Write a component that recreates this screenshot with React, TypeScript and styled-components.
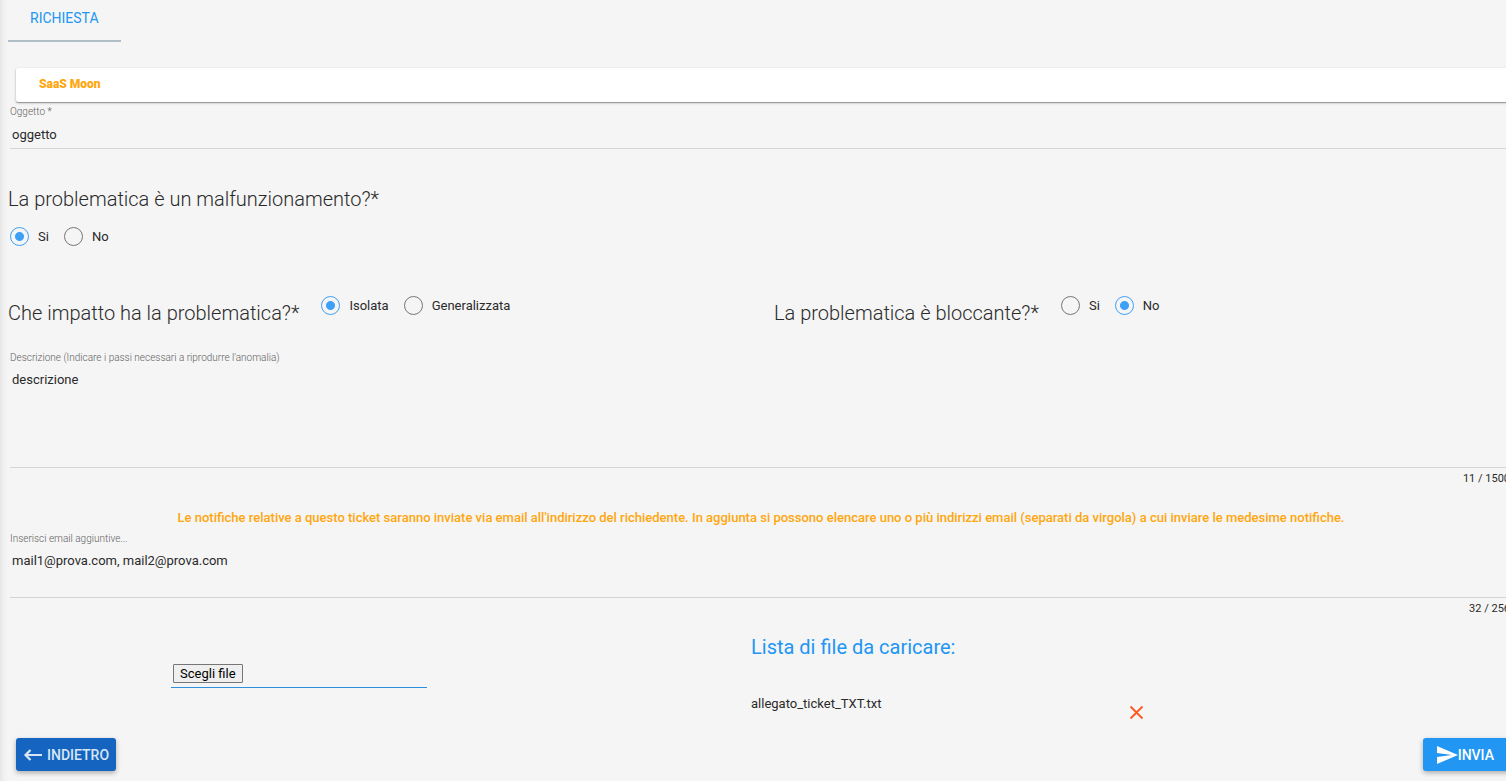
import React, { useId, useState } from "react";
import styled, { createGlobalStyle } from "styled-components";

const GlobalStyle = createGlobalStyle`
  *, *::before, *::after { box-sizing: border-box; }
  html { background: #f5f5f5; }
  body {
    margin: 0;
    overflow-x: hidden;
    color: #2a2a2a;
    font-family: Roboto, "Liberation Sans", sans-serif;
    font-size: 13px;
    line-height: 16px;
  }
  button, input, textarea { font: inherit; color: inherit; letter-spacing: inherit; }
`;

const Page = styled.main`
  min-height: 100vh;
  padding-left: 8px;
  overflow: hidden;
  background: #f5f5f5;
  box-shadow: inset 8px 0 8px -8px rgba(0, 0, 0, 0.12);
`;

const Form = styled.form`
  width: 100vw;
  display: flex;
  flex-direction: column;
`;

const Tab = styled.button`
  align-self: flex-start;
  height: 42px;
  padding: 0 22px 4px;
  border: 0;
  border-bottom: 2px solid #b0bec5;
  background: none;
  color: #2196f3;
  font-size: 14px;
  text-transform: uppercase;
`;

const Banner = styled.section`
  margin: 26px 0 0 8px;
  padding: 8px 23px 10px;
  border-radius: 2px;
  background: #fff;
  box-shadow: 0 1px 1px rgba(0, 0, 0, 0.3), 0 1px 3px rgba(0, 0, 0, 0.2);
  color: #ffa60d;
  font-size: 12px;
  font-weight: 900;
`;

const FieldBox = styled.div`
  display: flex;
  flex-direction: column;
  margin-left: 2px;
`;

const FieldLabel = styled.label`
  color: #616161;
  font-size: 10px;
  font-weight: 300;
  line-height: 12px;
`;

const SubjectLabel = styled(FieldLabel)`
  margin-top: 4px;
`;

const TextInput = styled.input`
  height: 31px;
  padding: 4px 2px 2px;
  border: 0;
  border-bottom: 1px solid #d4d4d4;
  border-radius: 0;
  background: none;
  outline: none;
`;

const TextArea = styled.textarea<{ $height: number }>`
  height: ${(p) => p.$height}px;
  padding: 8px 2px;
  border: 0;
  border-bottom: 1px solid #d4d4d4;
  background: none;
  outline: none;
  resize: none;
`;

const Counter = styled.span`
  align-self: flex-end;
  margin: 4px 4px 0 0;
  font-size: 11px;
  line-height: 14px;
`;

const Question = styled.h2<{ $accent?: boolean }>`
  margin: 0;
  color: ${(p) => (p.$accent ? "#2196f3" : "#2a2a2a")};
  font-size: 20px;
  font-weight: ${(p) => (p.$accent ? 400 : 300)};
  line-height: 24px;
`;

const QuestionBlock = styled.div`
  display: flex;
  flex-direction: column;
  gap: 16px;
  margin-top: 38px;
`;

const QuestionRow = styled.div`
  display: grid;
  grid-template-columns: 1fr 1fr;
  column-gap: 26px;
  margin-top: 42px;
`;

const QuestionInline = styled.div`
  display: flex;
  align-items: flex-end;
  gap: 20px;
  padding-top: 8px;
`;

const Options = styled.div<{ $raised?: boolean }>`
  display: flex;
  gap: 15px;
  padding-left: 2px;
  margin-bottom: ${(p) => (p.$raised ? 10 : 0)}px;
`;

const Option = styled.label`
  display: flex;
  align-items: center;
  gap: 9px;
`;

const Radio = styled.input`
  appearance: none;
  width: 19px;
  height: 19px;
  margin: 0;
  border: 1px solid #757575;
  border-radius: 50%;

  &:checked {
    border-color: #3d9ff5;
    background: radial-gradient(circle, #3d9ff5 0 4px, transparent 5px);
  }
`;

const Description = styled.div`
  margin-top: 27px;
`;

const Hint = styled.p`
  margin: 24px 0 7px;
  color: #ffa60d;
  font-size: 13px;
  font-weight: 500;
  text-align: center;
`;

const Files = styled.div`
  display: grid;
  grid-template-columns: 1fr 1fr;
  margin-top: 19px;
`;

const Picker = styled.div`
  width: 256px;
  height: 25px;
  margin: 28px 0 0 163px;
  padding: 1px 2px;
  border-bottom: 1px solid #2b90e0;
`;

const HiddenFile = styled.input`
  position: absolute;
  width: 1px;
  height: 1px;
  opacity: 0;
`;

const PickerLabel = styled.label`
  display: inline-block;
  padding: 0 6px;
  border: 1px solid #767676;
  border-radius: 1px;
  background: #efefef;
  color: #000;
  line-height: 17px;
`;

const FileList = styled.div`
  display: flex;
  flex-direction: column;
  gap: 37px;
  margin-left: -10px;
`;

const FileRow = styled.div`
  display: flex;
  justify-content: space-between;
  width: 393px;
`;

const RemoveButton = styled.button`
  display: flex;
  margin-top: 9px;
  padding: 0;
  border: 0;
  background: none;
  color: #ff5722;
`;

const Actions = styled.div`
  display: flex;
  justify-content: space-between;
  margin: 18px 0 10px;
  padding-left: 8px;
`;

const ActionButton = styled.button<{ $dark?: boolean }>`
  display: flex;
  align-items: center;
  gap: ${(p) => (p.$dark ? 4 : 0)}px;
  height: 33px;
  padding: ${(p) => (p.$dark ? "0 7px" : "0 20px 0 12px")};
  border: 0;
  border-radius: 3px;
  background: ${(p) => (p.$dark ? "#1565c0" : "#2196f3")};
  box-shadow: 0 2px 5px rgba(0, 0, 0, 0.3);
  color: ${(p) => (p.$dark ? "#d9e6f5" : "#fff")};
  font-size: 14px;
  font-weight: 500;
  text-transform: uppercase;
`;

function RadioGroup({ name, label, options, initial, raised }: {
  name: string; label: string; options: string[]; initial: string; raised?: boolean;
}) {
  const [value, setValue] = useState(initial);
  return (
    <Options role="radiogroup" aria-label={label} $raised={raised}>
      {options.map((o) => (
        <Option key={o}>
          <Radio type="radio" name={name} value={o} checked={value === o} onChange={() => setValue(o)} />
          {o}
        </Option>
      ))}
    </Options>
  );
}

function LongField({ label, initial, height, max }: {
  label: string; initial: string; height: number; max: number;
}) {
  const id = useId();
  const [value, setValue] = useState(initial);
  return (
    <FieldBox>
      <FieldLabel htmlFor={id}>{label}</FieldLabel>
      <TextArea id={id} $height={height} maxLength={max} value={value} spellCheck={false}
        onChange={(e) => setValue(e.target.value)} />
      <Counter>{value.length} / {max}</Counter>
    </FieldBox>
  );
}

export default function App() {
  return (
    <>
      <GlobalStyle />
      <Page>
        <Form onSubmit={(e) => e.preventDefault()}>
          <Tab type="button">Richiesta</Tab>
          <Banner>SaaS Moon</Banner>
          <FieldBox>
            <SubjectLabel htmlFor="subject">Oggetto *</SubjectLabel>
            <TextInput id="subject" defaultValue="oggetto" />
          </FieldBox>

          <QuestionBlock>
            <Question>La problematica è un malfunzionamento?*</Question>
            <RadioGroup name="fault" label="Malfunzionamento" options={["Si", "No"]} initial="Si" />
          </QuestionBlock>

          <QuestionRow>
            <QuestionInline>
              <Question>Che impatto ha la problematica?*</Question>
              <RadioGroup name="impact" label="Impatto" options={["Isolata", "Generalizzata"]} initial="Isolata" raised />
            </QuestionInline>
            <QuestionInline>
              <Question>La problematica è bloccante?*</Question>
              <RadioGroup name="blocking" label="Bloccante" options={["Si", "No"]} initial="No" raised />
            </QuestionInline>
          </QuestionRow>

          <Description>
            <LongField label="Descrizione (Indicare i passi necessari a riprodurre l'anomalia)"
              initial="descrizione" height={104} max={1500} />
          </Description>

          <Hint>
            Le notifiche relative a questo ticket saranno inviate via email all'indirizzo del richiedente. In aggiunta si
            possono elencare uno o più indirizzi email (separati da virgola) a cui inviare le medesime notifiche.
          </Hint>
          <LongField label="Inserisci email aggiuntive..." initial="mail1@prova.com, mail2@prova.com" height={53} max={256} />

          <Files>
            <Picker>
              <HiddenFile id="attachment" type="file" />
              <PickerLabel htmlFor="attachment">Scegli file</PickerLabel>
            </Picker>
            <FileList>
              <Question $accent>Lista di file da caricare:</Question>
              <FileRow>
                <span>allegato_ticket_TXT.txt</span>
                <RemoveButton type="button" aria-label="Rimuovi allegato">
                  <svg width="15" height="15" viewBox="0 0 15 15" stroke="currentColor" strokeWidth="1.8">
                    <path d="M1.5 1.5l12 12M13.5 1.5l-12 12" />
                  </svg>
                </RemoveButton>
              </FileRow>
            </FileList>
          </Files>

          <Actions>
            <ActionButton type="button" $dark>
              <svg width="20" height="20" viewBox="0 0 20 20" fill="none" stroke="currentColor" strokeWidth="2.2">
                <path d="M19 10H3M7.5 5l-5 5 5 5" />
              </svg>
              Indietro
            </ActionButton>
            <ActionButton type="submit">
              <svg width="23" height="20" viewBox="0 0 23 20" fill="currentColor">
                <path d="M2 1l21 9-21 9v-7l15-2-15-2z" />
              </svg>
              Invia
            </ActionButton>
          </Actions>
        </Form>
      </Page>
    </>
  );
}
